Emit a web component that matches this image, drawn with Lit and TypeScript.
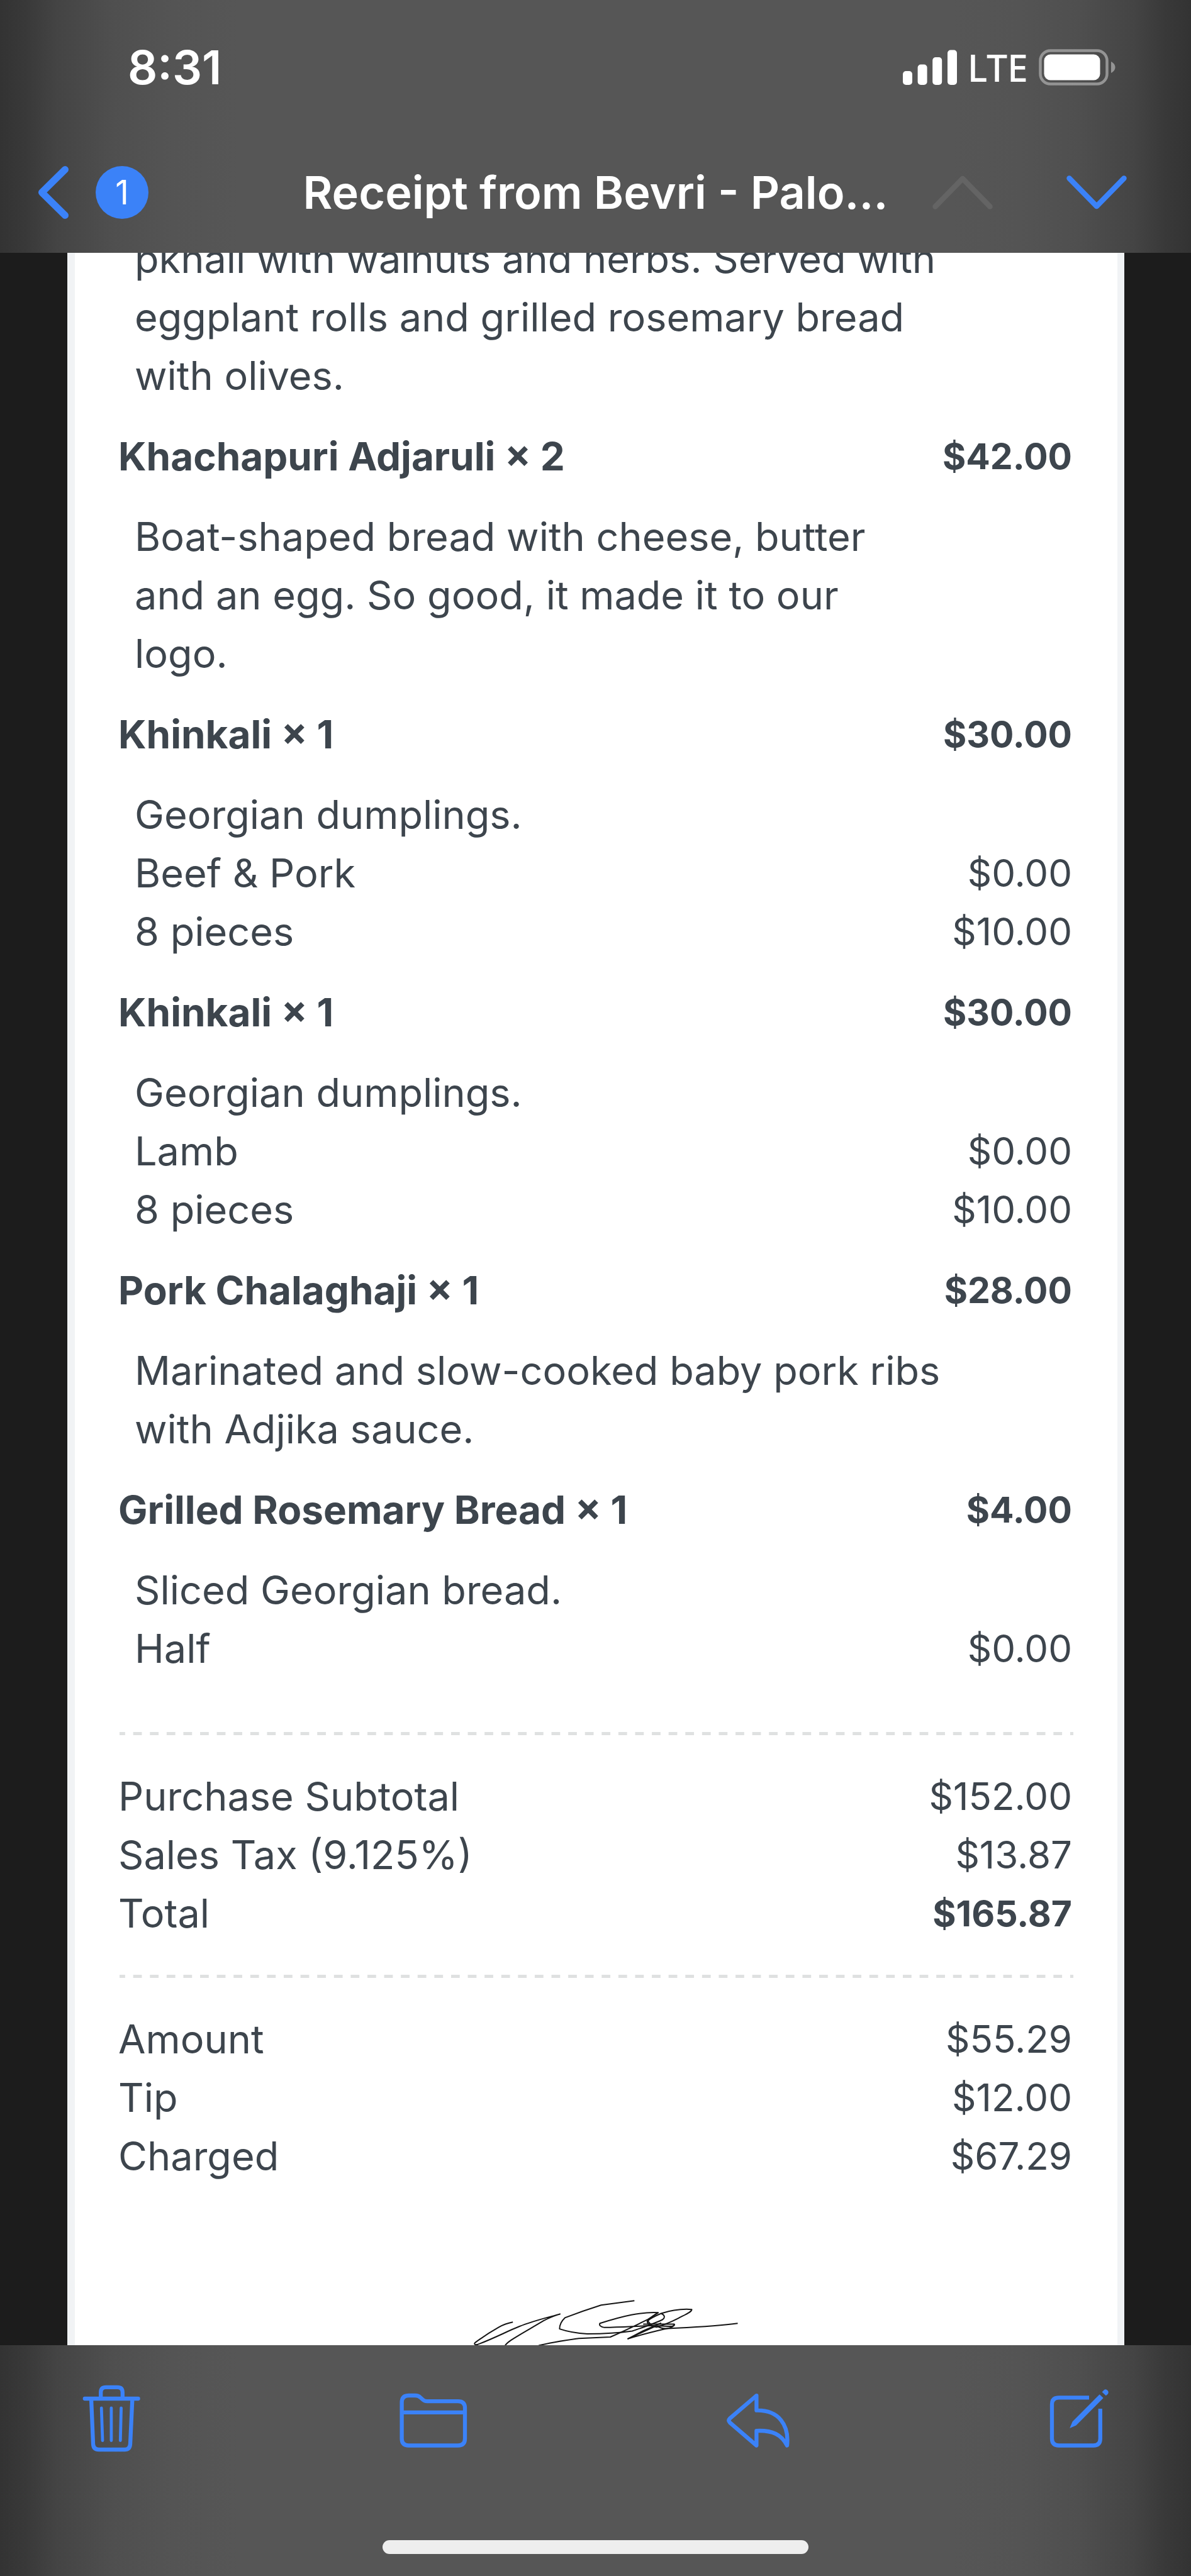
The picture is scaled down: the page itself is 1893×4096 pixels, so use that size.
import { LitElement, html, css, svg, nothing } from "lit";
import { customElement } from "lit/decorators.js";

interface Line {
  text: string;
  price?: string;
}

interface Item {
  name?: string;
  price?: string;
  lines: Line[];
}

const ITEMS: Item[] = [
  {
    lines: [
      {
        text: "pkhali with walnuts and herbs. Served with\neggplant rolls and grilled rosemary bread\nwith olives.",
      },
    ],
  },
  {
    name: "Khachapuri Adjaruli × 2",
    price: "$42.00",
    lines: [
      {
        text: "Boat-shaped bread with cheese, butter\nand an egg. So good, it made it to our\nlogo.",
      },
    ],
  },
  {
    name: "Khinkali × 1",
    price: "$30.00",
    lines: [
      { text: "Georgian dumplings." },
      { text: "Beef & Pork", price: "$0.00" },
      { text: "8 pieces", price: "$10.00" },
    ],
  },
  {
    name: "Khinkali × 1",
    price: "$30.00",
    lines: [
      { text: "Georgian dumplings." },
      { text: "Lamb", price: "$0.00" },
      { text: "8 pieces", price: "$10.00" },
    ],
  },
  {
    name: "Pork Chalaghaji × 1",
    price: "$28.00",
    lines: [
      { text: "Marinated and slow-cooked baby pork ribs\nwith Adjika sauce." },
    ],
  },
  {
    name: "Grilled Rosemary Bread × 1",
    price: "$4.00",
    lines: [
      { text: "Sliced Georgian bread." },
      { text: "Half", price: "$0.00" },
    ],
  },
];

const TOTALS = [
  { label: "Purchase Subtotal", value: "$152.00" },
  { label: "Sales Tax (9.125%)", value: "$13.87" },
  { label: "Total", value: "$165.87", strong: true },
];

const PAYMENT = [
  { label: "Amount", value: "$55.29" },
  { label: "Tip", value: "$12.00" },
  { label: "Charged", value: "$67.29" },
];

@customElement("status-bar")
export class StatusBar extends LitElement {
  static styles = css`
    :host {
      display: flex;
      align-items: center;
      justify-content: space-between;
      height: 214px;
      padding: 0 120px 0 203px;
      box-sizing: border-box;
      color: #fff;
    }
    .time {
      font-size: 74px;
      font-weight: 600;
      line-height: 1;
    }
    .indicators {
      display: flex;
      align-items: center;
      gap: 17px;
    }
    .network {
      font-family: "Noto Sans", "Open Sans", sans-serif;
      font-size: 59px;
      font-weight: 500;
      line-height: 1;
    }
    svg {
      display: block;
    }
  `;

  render() {
    return html`
      <span class="time">8:31</span>
      <div class="indicators">
        <svg width="86" height="58" viewBox="0 0 86 58" fill="#fff" aria-hidden="true">
          <rect x="0" y="35" width="15" height="22" rx="5" />
          <rect x="23.6" y="24.5" width="15" height="32.5" rx="5" />
          <rect x="47.2" y="13" width="15" height="44" rx="5" />
          <rect x="71" y="1.5" width="15" height="55.5" rx="5" />
        </svg>
        <span class="network">LTE</span>
        <svg width="122" height="58" viewBox="0 0 122 58" aria-hidden="true">
          <rect x="2.5" y="2.5" width="106" height="53" rx="16" fill="none" stroke="#949494" stroke-width="4.5" />
          <rect x="8.5" y="8.5" width="89" height="41" rx="10" fill="#fff" />
          <path d="M115 20C119 22 121.500 25 121.500 29S119 36 115 38Z" fill="#949494" />
        </svg>
      </div>
    `;
  }
}

@customElement("nav-bar")
export class NavBar extends LitElement {
  static styles = css`
    :host {
      display: grid;
      grid-template-columns: 1fr auto 1fr;
      align-items: center;
      height: 184px;
      padding: 0 60px;
      box-sizing: border-box;
      color: #fff;
    }
    button {
      display: block;
      padding: 0;
      border: 0;
      background: none;
      font: inherit;
    }
    svg {
      display: block;
    }
    .back {
      display: flex;
      align-items: center;
      justify-self: start;
      gap: 43px;
      color: #fff;
    }
    .badge {
      display: grid;
      place-items: center;
      width: 84px;
      height: 84px;
      border-radius: 50%;
      background: #3b82f8;
      font-size: 53px;
      line-height: 1;
    }
    .title {
      margin: 0;
      font-size: 72px;
      font-weight: 600;
      line-height: 1;
      white-space: nowrap;
    }
    .steps {
      display: flex;
      justify-self: end;
      gap: 117px;
      margin-right: 42px;
    }
  `;

  render() {
    return html`
      <button class="back" aria-label="Back, 1 unread">
        <svg width="49" height="84" viewBox="0 0 49 84" fill="none" stroke="#3b82f8" stroke-width="11" stroke-linecap="round" stroke-linejoin="round" aria-hidden="true">
          <path d="M43.500 5.500L6.500 42L43.500 78.500" />
        </svg>
        <span class="badge">1</span>
      </button>
      <h1 class="title">Receipt from Bevri - Palo...</h1>
      <div class="steps">
        <button aria-label="Previous message" disabled>
          <svg width="96" height="54" viewBox="0 0 96 54" fill="none" stroke="#646464" stroke-width="8.500" stroke-linecap="round" stroke-linejoin="round" aria-hidden="true">
            <path d="M4.500 49.500L48 5L91.500 49.500" />
          </svg>
        </button>
        <button aria-label="Next message">
          <svg width="96" height="54" viewBox="0 0 96 54" fill="none" stroke="#3b82f8" stroke-width="8.500" stroke-linecap="round" stroke-linejoin="round" aria-hidden="true">
            <path d="M4.500 4.500L48 49L91.500 4.500" />
          </svg>
        </button>
      </div>
    `;
  }
}

@customElement("receipt-paper")
export class ReceiptPaper extends LitElement {
  static styles = css`
    :host {
      display: block;
      background: #fff;
      border: solid #f1f3f5;
      border-width: 0 11px 0 12px;
      padding: 0 70px 0 69px;
      color: #3d454d;
      font-size: 63px;
      line-height: 93px;
    }
    table {
      width: 100%;
      border-collapse: collapse;
    }
    th,
    td {
      padding: 0;
      font-weight: 400;
      text-align: left;
      vertical-align: top;
    }
    .amount {
      padding-right: 2px;
      font-size: 60px;
      text-align: right;
      white-space: nowrap;
    }
    .name th,
    .name td {
      padding-top: 35px;
      padding-bottom: 35px;
      font-weight: 700;
    }
    .name th {
      font-size: 62px;
    }
    .name .amount,
    .strong {
      font-size: 57px;
      font-weight: 700;
    }
    .line th {
      padding-left: 26px;
      white-space: pre-line;
    }
    .rule {
      height: 5px;
      margin: 51px 0 51px 2px;
      border: 0;
      background: linear-gradient(
          90deg,
          #dfe1e1 0 32%,
          transparent 32% 82%,
          #dfe1e1 82%
        )
        0 0 / calc(100% / 57) 100%;
    }
    .items + .rule {
      margin-top: 86px;
    }
    .signature {
      display: block;
      width: 644px;
      height: 151px;
      margin: 141px auto 0;
    }
  `;

  private rows(list: { label: string; value: string; strong?: boolean }[]) {
    return html`
      <table>
        <tbody>
          ${list.map(
            (r) => html`<tr>
              <th scope="row">${r.label}</th>
              <td class="amount ${r.strong ? "strong" : ""}">${r.value}</td>
            </tr>`
          )}
        </tbody>
      </table>
    `;
  }

  private item(item: Item) {
    return html`<tbody>
      ${item.name
        ? html`<tr class="name">
            <th scope="row">${item.name}</th>
            <td class="amount">${item.price}</td>
          </tr>`
        : nothing}
      ${item.lines.map(
        (l) => html`<tr class="line">
          <th scope="row">${l.text}</th>
          <td class="amount">${l.price ?? nothing}</td>
        </tr>`
      )}
    </tbody>`;
  }

  render() {
    const strokes = [
      "M394 242C370 248 350 258 335 268C300 292 262 324 238 346C232 354 240 358 250 354C320 322 370 288 420 264C480 234 540 218 588 201C560 212 540 222 520 235C470 272 420 305 385 334C372 345 365 352 360 364",
      "M894 134L757 156C700 178 650 200 608 220C594 236 586 254 586 276C620 290 655 298 700 301C770 301 840 295 885 287C930 268 975 250 1010 229C1022 218 1018 206 1004 198C985 208 960 222 947 236C945 250 962 264 985 267C1010 258 1040 244 1075 222C1110 200 1130 190 1130 178C1085 174 1040 184 1004 198",
      "M500 360C560 342 620 332 665 324L795 317C845 290 900 258 950 228L992 194C920 190 850 210 752 248C748 258 755 266 770 269C840 268 900 262 960 260C1000 258 1020 266 1050 262C1058 260 1060 256 1058 252H930",
      "M1058 254C1056 262 1048 270 1028 274C1010 276 995 268 988 262",
      "M992 194C975 206 960 220 950 236C955 250 970 262 975 266L867 326C930 302 980 288 1028 274C1130 268 1230 264 1319 248",
      "M867 326L930 286L1004 246",
    ];
    return html`
      <table class="items">
        ${ITEMS.map((i) => this.item(i))}
      </table>
      <hr class="rule" />
      ${this.rows(TOTALS)}
      <hr class="rule" />
      ${this.rows(PAYMENT)}
      <svg class="signature" viewBox="-38 0 644 151" role="img" aria-label="Signature">
        <g transform="scale(.3863 .3155)" fill="none" stroke="#151515" stroke-width="2" stroke-linejoin="round">
          ${strokes.map((d) => svg`<path vector-effect="non-scaling-stroke" d=${d} />`)}
        </g>
      </svg>
    `;
  }
}

@customElement("mail-toolbar")
export class MailToolbar extends LitElement {
  static styles = css`
    :host {
      display: flex;
      flex-direction: column;
      justify-content: space-between;
      align-items: center;
      height: 367px;
      padding: 63px 131px 35px;
      box-sizing: border-box;
    }
    .actions {
      display: flex;
      align-items: center;
      justify-content: space-between;
      align-self: stretch;
    }
    button {
      display: block;
      padding: 0;
      border: 0;
      background: none;
    }
    svg {
      display: block;
      fill: none;
      stroke: #3b82f8;
      stroke-width: 6.3;
      stroke-linecap: round;
      stroke-linejoin: round;
    }
    .fine {
      stroke-width: 4.8;
    }
    .butt {
      stroke-linecap: butt;
    }
    .solid {
      fill: #3b82f8;
      stroke: none;
    }
    .home {
      width: 677px;
      height: 22px;
      border-radius: 11px;
      background: #eee;
    }
  `;

  render() {
    return html`
      <div class="actions">
        <button aria-label="Delete">
          <svg width="92" height="107" viewBox="131 100 92 107">
            <path d="M134.800 122H219.600M160.200 121V112Q160.200 103.800 168.400 103.800H186.600Q194.800 103.800 194.800 112V121M145 122L148 194Q148.500 203 157 203H198Q206.500 203 207 194L210.400 122" />
            <path class="fine" d="M161.200 137L163 188.500M176.900 137V188.500M192.600 137L191.300 188.500" />
          </svg>
        </button>
        <button aria-label="Move to folder">
          <svg width="108" height="107" viewBox="631 100 108 107">
            <path d="M634.600 143.900V128Q634.600 117 645.500 117H656Q661 117 664 120L668.500 124Q671 126.200 675 126.200H724Q735 126.200 735 137V185.500Q735 196.500 724 196.500H645.500Q634.600 196.500 634.600 185.500ZM634.600 143.900H735" />
          </svg>
        </button>
        <button aria-label="Reply">
          <svg width="101" height="107" viewBox="1149 100 101 107">
            <path d="M1196.400 117.200L1154 153.500Q1150.800 156.800 1154 160L1196.400 196.500V173.100C1222 172 1236 179 1245 196.500C1248.500 164 1232 140 1196.400 140.700Z" />
          </svg>
        </button>
        <button aria-label="Compose">
          <svg width="94" height="107" viewBox="1667 100 94 107">
            <path class="butt" d="M1730 120.300H1682Q1671 120.300 1671 131V185.500Q1671 196.500 1682 196.500H1737Q1747.800 196.500 1747.800 185.500V138" />
            <path class="solid" d="M1699.200 169L1703.600 158.500L1746.700 115.200L1752.700 121L1709.500 164.500ZM1750.600 111.500L1753.500 108.500Q1756.500 106 1759.500 109Q1762 112 1759.500 115L1756.800 117.300Z" />
          </svg>
        </button>
      </div>
      <div class="home"></div>
    `;
  }
}

@customElement("app-root")
export class AppRoot extends LitElement {
  static styles = css`
    :host {
      display: flex;
      flex-direction: column;
      height: 100vh;
      background: #1c1c1c;
      font-family: Inter, "Liberation Sans", sans-serif;
    }
    .bar {
      flex: none;
      background: linear-gradient(
        90deg,
        #333 0,
        #393939 42px,
        #444 90px,
        #4f4f4f 180px,
        #545454 272px,
        #565656 380px,
        #565656 calc(100% - 380px),
        #545454 calc(100% - 272px),
        #4f4f4f calc(100% - 180px),
        #444 calc(100% - 90px),
        #393939 calc(100% - 42px),
        #333 100%
      );
    }
    .top {
      padding-bottom: 4px;
    }
    .message {
      flex: 1;
      min-height: 0;
      overflow: hidden;
      padding: 0 106px 0 107px;
    }
    .scrolled {
      margin-top: -37px;
    }
  `;

  render() {
    return html`
      <header class="bar top">
        <status-bar></status-bar>
        <nav-bar></nav-bar>
      </header>
      <main class="message">
        <receipt-paper class="scrolled"></receipt-paper>
      </main>
      <footer class="bar">
        <mail-toolbar></mail-toolbar>
      </footer>
    `;
  }
}
